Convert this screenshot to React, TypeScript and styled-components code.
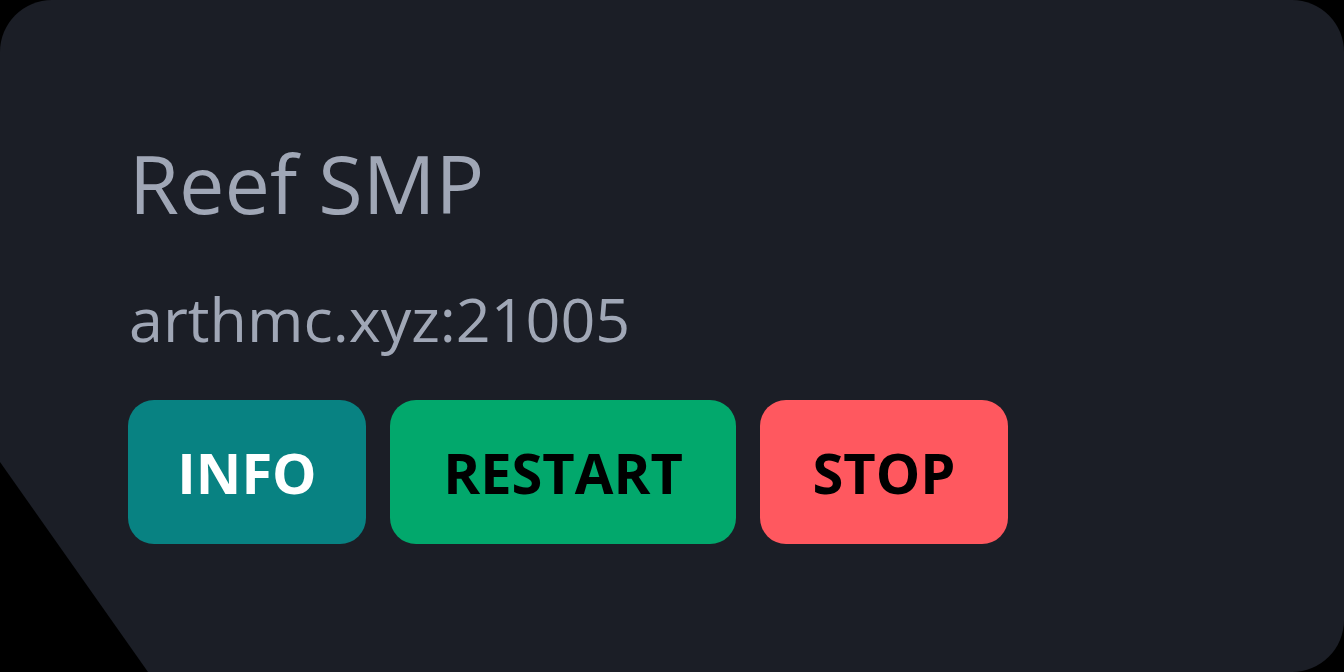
import React from "react";
import styled, { createGlobalStyle } from "styled-components";

const GlobalStyle = createGlobalStyle`
  html, body {
    margin: 0;
    padding: 0;
    background: #000000;
    width: 1344px;
    height: 672px;
    overflow: hidden;
  }
  * { box-sizing: border-box; }
`;

const Card = styled.div`
  width: 1344px;
  height: 672px;
  background: #1b1e26;
  border-radius: 52px;
  clip-path: polygon(0 0, 100% 0, 100% 100%, 148px 100%, 0 462px);
  padding: 142px 0 0 128px;
  display: flex;
  flex-direction: column;
  font-family: "Open Sans", "Noto Sans", sans-serif;
`;

const Title = styled.h1`
  margin: 0 0 0 1px;
  font-size: 81px;
  line-height: 81px;
  font-weight: 400;
  color: #a0a7b6;
`;

const Address = styled.div`
  margin: 61px 0 0 1px;
  font-size: 61px;
  line-height: 70px;
  font-weight: 400;
  color: #a0a7b6;
`;

const ButtonRow = styled.div`
  display: flex;
  gap: 24px;
  margin-top: 46px;
`;

const ActionButton = styled.button<{ $bg: string; $fg: string; $width: number }>`
  width: ${(p) => p.$width}px;
  height: 144px;
  border: none;
  border-radius: 26px;
  background: ${(p) => p.$bg};
  color: ${(p) => p.$fg};
  font-family: "Open Sans", "Noto Sans", sans-serif;
  font-weight: 700;
  font-size: 56px;
  display: flex;
  align-items: center;
  justify-content: center;
  padding: 0;
  cursor: pointer;
`;

export default function App() {
  return (
    <>
      <GlobalStyle />
      <Card>
        <Title>Reef SMP</Title>
        <Address>arthmc.xyz:21005</Address>
        <ButtonRow>
          <ActionButton $bg="#088282" $fg="#ffffff" $width={238}>INFO</ActionButton>
          <ActionButton $bg="#02a86c" $fg="#000000" $width={346}>RESTART</ActionButton>
          <ActionButton $bg="#ff585f" $fg="#000000" $width={248}>STOP</ActionButton>
        </ButtonRow>
      </Card>
    </>
  );
}
